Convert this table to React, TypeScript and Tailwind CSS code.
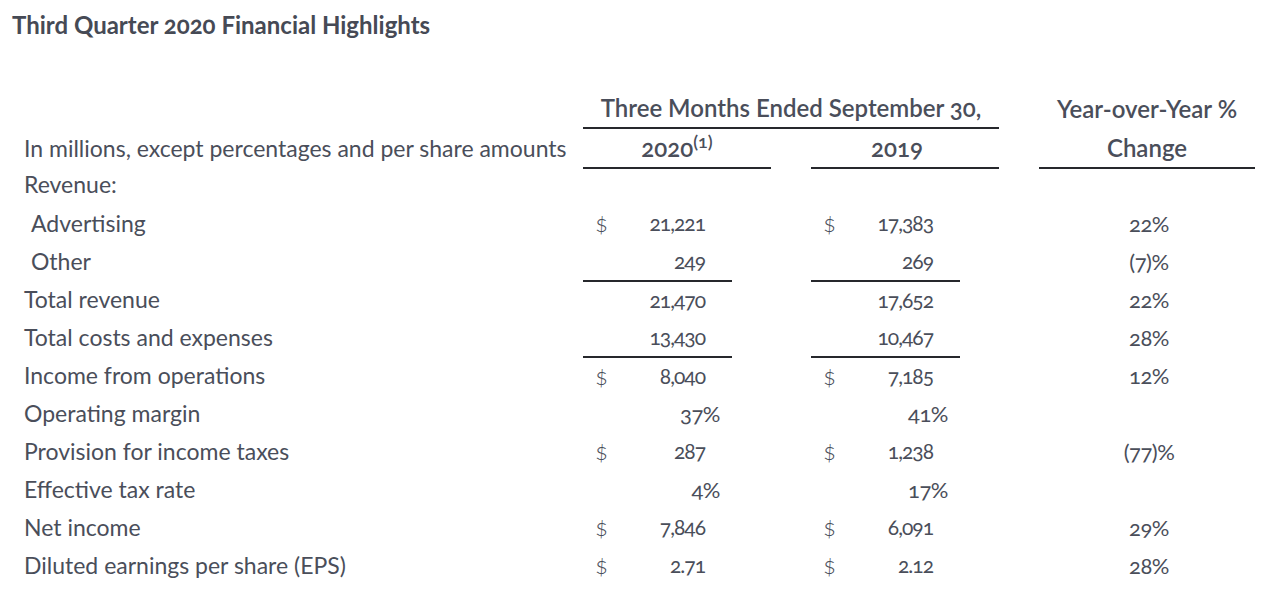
import React from "react";

type Row = {
  label: string;
  indent?: boolean;
  a?: string;
  b?: string;
  dollar?: boolean;
  pct?: boolean;
  change?: string;
  ruleTop?: boolean;
};

const rows: Row[] = [
  { label: "Advertising", indent: true, a: "21,221", b: "17,383", dollar: true, change: "22%" },
  { label: "Other", indent: true, a: "249", b: "269", change: "(7)%" },
  { label: "Total revenue", a: "21,470", b: "17,652", change: "22%", ruleTop: true },
  { label: "Total costs and expenses", a: "13,430", b: "10,467", change: "28%" },
  { label: "Income from operations", a: "8,040", b: "7,185", dollar: true, change: "12%", ruleTop: true },
  { label: "Operating margin", a: "37%", b: "41%", pct: true },
  { label: "Provision for income taxes", a: "287", b: "1,238", dollar: true, change: "(77)%" },
  { label: "Effective tax rate", a: "4%", b: "17%", pct: true },
  { label: "Net income", a: "7,846", b: "6,091", dollar: true, change: "29%" },
  { label: "Diluted earnings per share (EPS)", a: "2.71", b: "2.12", dollar: true, change: "28%" }
];

const cols = "grid grid-cols-[583px_188px_40px_188px_40px_216px]";

function Amount({ value, dollar, pct, ruleTop }: { value?: string; dollar?: boolean; pct?: boolean; ruleTop?: boolean }) {
  return (
    <div
      className={
        "flex h-full w-[149px] items-center justify-between pl-3 " +
        (pct ? "pr-3 text-[22px] tracking-[-0.5px] " : "pr-[27px] text-[21px] tracking-[-1px] ") +
        (ruleTop ? "border-t-2 border-[#26282c]" : "")
      }
    >
      <span className="text-[24px] font-light">{dollar ? "$" : ""}</span>
      <span>{value}</span>
    </div>
  );
}

export default function App() {
  return (
    <div className="min-h-[609px] w-[1280px] bg-white font-['Lato',sans-serif] text-[23px] text-[#4a4e5a] [font-variant-numeric:oldstyle-nums]">
      <div className="px-3 pt-[11px]">
        <h1 className="text-[24px] font-bold leading-[28px] text-[#464a55]">Third Quarter 2020 Financial Highlights</h1>
      </div>

      <div className="mt-[49px]">
        {/* header */}
        <div className={cols + " h-[41px] text-[24px] font-semibold"}>
          <div />
          <div className="col-span-3 flex items-center justify-center border-b-2 border-[#26282c]">
            Three Months Ended September 30,
          </div>
          <div />
          <div className="flex items-center justify-center">Year-over-Year %</div>
        </div>
        <div className={cols + " h-[40px]"}>
          <div className="flex items-center pb-[2px] pl-6">In millions, except percentages and per share amounts</div>
          <div className="flex items-center justify-center border-b-2 border-[#26282c] text-[24px] font-semibold">
            <span>
              2020<sup className="text-[18px]">(1)</sup>
            </span>
          </div>
          <div />
          <div className="flex items-center justify-center border-b-2 border-[#26282c] pr-4 text-[24px] font-semibold">
            2019
          </div>
          <div />
          <div className="flex items-center justify-center border-b-2 border-[#26282c] text-[24px] font-semibold">
            Change
          </div>
        </div>

        {/* body */}
        <div className={cols + " h-[35px] leading-[30px]"}>
          <div className="pl-6">Revenue:</div>
        </div>
        {rows.map((r) => (
          <div key={r.label} className={cols + " h-[38px]"}>
            <div className={"flex items-center " + (r.indent ? "pl-[31px]" : "pl-6")}>{r.label}</div>
            <Amount value={r.a} dollar={r.dollar} pct={r.pct} ruleTop={r.ruleTop} />
            <div />
            <Amount value={r.b} dollar={r.dollar} pct={r.pct} ruleTop={r.ruleTop} />
            <div />
            <div className="flex items-center justify-center pl-1 text-[22px] tracking-[-0.5px]">{r.change}</div>
          </div>
        ))}
      </div>
    </div>
  );
}
